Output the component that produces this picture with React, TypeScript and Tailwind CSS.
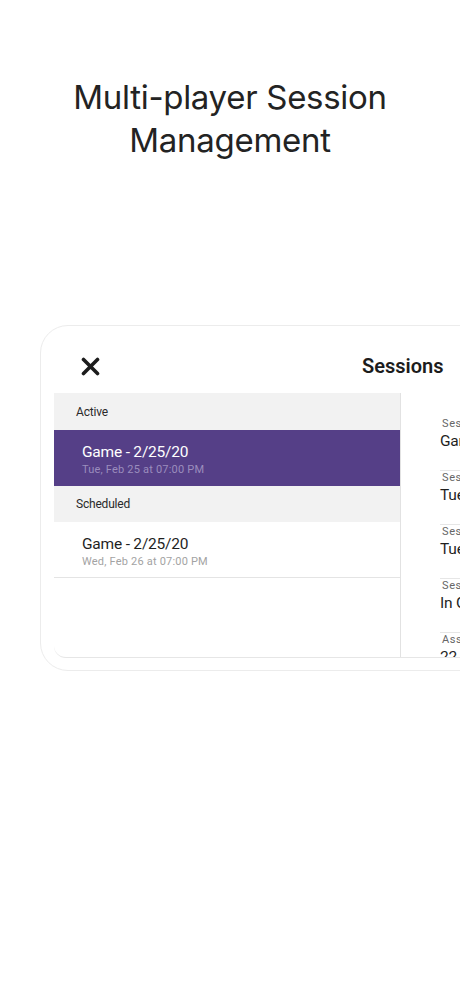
import React from 'react'

const titleFont = { fontFamily: 'Inter, "Noto Sans", sans-serif' }
const bodyFont = { fontFamily: 'Roboto, "Noto Sans", sans-serif' }

const details = [
  { label: 'Session Name', value: 'Game - 2/25/20' },
  { label: 'Session Start', value: 'Tue, Feb 25 at 07:00 PM' },
  { label: 'Session End', value: 'Tue, Feb 25 at 11:00 PM' },
  { label: 'Session Status', value: 'In Game' },
  { label: 'Assigned Players', value: '22' },
]

function CloseIcon() {
  return (
    <svg width="19" height="19" viewBox="0 0 19 19" className="text-[#1c1c1c]">
      <path d="M2.5 2.5 L16.5 16.5 M16.5 2.5 L2.5 16.5" stroke="currentColor" strokeWidth="3.6" strokeLinecap="round" />
    </svg>
  )
}

export default function App() {
  return (
    <div className="w-[460px] h-[996px] bg-white overflow-hidden">
      <h1 className="pt-[76px] text-center text-[33px] leading-[43px] text-[#232323] tracking-[-0.3px]" style={titleFont}>
        Multi-player Session
        <br />
        Management
      </h1>

      <div className="mt-[163px] ml-[40px] w-[480px] h-[346px] rounded-[28px] border border-[#ececec] pt-[13px] pl-[13px]" style={bodyFont}>
        <div className="w-[470px] h-[319px] rounded-bl-[12px] border-b border-[#e6e6e6] overflow-hidden flex flex-col">
          <div className="h-[54px] flex items-center shrink-0">
            <div className="ml-[27px] mt-[1px]"><CloseIcon /></div>
            <div className="ml-[262px] text-[20px] font-semibold text-[#1c1c1c]">Sessions</div>
          </div>
          <div className="flex flex-1 min-h-0">
            <div className="w-[347px] border-r border-[#e2e2e2] shrink-0">
              <div className="h-[37px] bg-[#f2f2f2] flex items-center pl-[22px] text-[12px] text-[#2a2a2a] tracking-[-0.2px]">Active</div>
              <div className="h-[56px] bg-[#553f87] flex flex-col justify-center pl-[28px] pt-[3px]">
                <div className="text-[15.5px] leading-[19px] text-white tracking-[-0.2px]">Game - 2/25/20</div>
                <div className="text-[11px] leading-[15px] text-[#9b8dbd] tracking-[0.2px]">Tue, Feb 25 at 07:00 PM</div>
              </div>
              <div className="h-[36px] bg-[#f2f2f2] flex items-center pl-[22px] text-[12px] text-[#2a2a2a] tracking-[-0.2px]">Scheduled</div>
              <div className="h-[56px] bg-white border-b border-[#e4e4e4] flex flex-col justify-center pl-[28px] pt-[4px]">
                <div className="text-[15.5px] leading-[19px] text-[#1f1f1f] tracking-[-0.2px]">Game - 2/25/20</div>
                <div className="text-[11px] leading-[15px] text-[#a3a3a3] tracking-[0.2px]">Wed, Feb 26 at 07:00 PM</div>
              </div>
            </div>
            <div className="flex-1 pl-[39px] pt-[24px] overflow-hidden">
              {details.map((d, i) => (
                <div key={i} className="h-[54px] border-b border-[#e6e6e6] whitespace-nowrap">
                  <div className="pl-[2px] text-[11px] leading-[13px] text-[#666] tracking-[0.6px]">{d.label}</div>
                  <div className="mt-[2px] text-[15.5px] leading-[19px] text-[#1f1f1f] tracking-[-0.2px]">{d.value}</div>
                </div>
              ))}
            </div>
          </div>
        </div>
      </div>
    </div>
  )
}
